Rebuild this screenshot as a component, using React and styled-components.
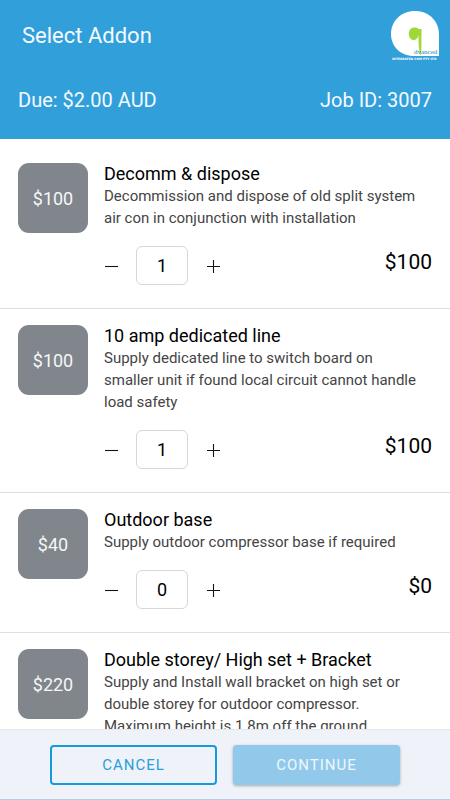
import React, { useState } from "react";
import styled, { createGlobalStyle } from "styled-components";

const GlobalStyle = createGlobalStyle`
  *, *::before, *::after { box-sizing: border-box; }
  body { margin: 0; background: #fff; color: #000; font-family: Roboto, "Liberation Sans", sans-serif; }
  button, input { font: inherit; color: inherit; }
`;

const Screen = styled.div`
  display: flex;
  flex-direction: column;
  height: 100vh;
`;

const Header = styled.header`
  flex: none;
  display: flex;
  flex-direction: column;
  background: #31a0da;
  color: #f4faff;
`;

const TitleBar = styled.div`
  display: flex;
  align-items: center;
  justify-content: space-between;
  height: 72px;
  padding: 0 10px 0 22px;
`;

const Title = styled.h1`
  margin: 0;
  font-size: 22px;
  line-height: 28px;
  font-weight: 400;
`;

const Logo = styled.svg`
  display: block;
  width: 50px;
  height: 50px;
`;

const Summary = styled.div`
  display: flex;
  justify-content: space-between;
  padding: 14px 18px 25px;
  font-size: 20px;
  line-height: 28px;
`;

const List = styled.ul`
  flex: 1;
  min-height: 0;
  overflow-y: auto;
  scrollbar-width: none;
  margin: 0;
  padding: 8px 0 0;
  list-style: none;
`;

const Item = styled.li`
  display: flex;
  gap: 16px;
  padding: 16px 18px 23px;
  border-bottom: 1px solid #dedfe1;
`;

const Badge = styled.div`
  flex: none;
  display: flex;
  align-items: center;
  justify-content: center;
  width: 70px;
  height: 70px;
  border-radius: 11px;
  background: #80868c;
  color: #f5f6f8;
  font-size: 18px;
`;

const Details = styled.div`
  flex: 1;
  min-width: 0;
`;

const Name = styled.h2`
  margin: 0;
  font-size: 18px;
  line-height: 22px;
  font-weight: 400;
`;

const Description = styled.p`
  margin: 0;
  padding-right: 8px;
  color: #444;
  font-size: 15px;
  line-height: 22px;
`;

const Controls = styled.div`
  display: flex;
  justify-content: space-between;
  margin-top: 17px;
`;

const Stepper = styled.div`
  display: flex;
  align-items: center;
  gap: 18px;
`;

const StepButton = styled.button`
  display: flex;
  padding: 0;
  border: 0;
  background: none;
  cursor: pointer;
`;

const Quantity = styled.input`
  width: 52px;
  height: 39px;
  padding: 0;
  border: 1px solid #d5d6df;
  border-radius: 6px;
  background: #fff;
  text-align: center;
  font-size: 18px;
`;

const Total = styled.output`
  font-size: 21px;
  line-height: 32px;
`;

const Footer = styled.footer`
  flex: none;
  display: grid;
  grid-template-columns: 1fr 1fr;
  gap: 16px;
  padding: 15px 50px 14px;
  border-top: 1px solid #e6e7ea;
  border-bottom: 1px solid #b4cde8;
  background: #eff2f8;
`;

const ActionButton = styled.button`
  height: 40px;
  padding: 0;
  border: ${(p) => (p.$filled ? "0" : "2px solid #159bd9")};
  border-radius: 4px;
  background: ${(p) => (p.$filled ? "#92c9ea" : "transparent")};
  color: ${(p) => (p.$filled ? "#eff7fd" : "#279fda")};
  box-shadow: ${(p) => (p.$filled ? "0 1px 3px rgba(0, 0, 0, 0.3)" : "none")};
  font-size: 15px;
  letter-spacing: 1px;
  cursor: pointer;
`;

const addons = [
  {
    name: "Decomm & dispose",
    description:
      "Decommission and dispose of old split system air con in conjunction with installation",
    price: 100,
    quantity: 1,
  },
  {
    name: "10 amp dedicated line",
    description:
      "Supply dedicated line to switch board on smaller unit if found local circuit cannot handle load safety",
    price: 100,
    quantity: 1,
  },
  {
    name: "Outdoor base",
    description: "Supply outdoor compressor base if required",
    price: 40,
    quantity: 0,
  },
  {
    name: "Double storey/ High set + Bracket",
    description:
      "Supply and Install wall bracket on high set or double storey for outdoor compressor. Maximum height is 1.8m off the ground",
    price: 220,
    quantity: 0,
  },
];

function StepIcon({ plus }) {
  return (
    <svg width="14" height="14" viewBox="0 0 14 14" aria-hidden="true">
      <path
        d={plus ? "M1 7.5H14M7.5 1V14" : "M1 7.5H14"}
        stroke="#151515"
        strokeWidth="1.1"
        fill="none"
      />
    </svg>
  );
}

function CompanyLogo() {
  return (
    <Logo viewBox="0 0 50 50" role="img" aria-label="Advanced">
      <path d="M25 0C39 0 49 10 49 24V45H24C10 45 1 35 1 23C1 10 11 0 25 0Z" fill="#fff" />
      <path
        d="M31.5 18H28.5C26.5 16 22 16 20 18.5C17.5 22 19 28 23 29C26 29.5 28 27 28.5 24C28.5 32 28.5 40 31 45C31.5 40 31.5 30 31.5 18Z"
        fill="#a1d839"
      />
      <text x="24" y="43" fontSize="7" fontFamily="Liberation Serif, serif" fill="#2089b8">
        dvanced
      </text>
      <text
        x="2"
        y="49"
        fontSize="3"
        fontWeight="700"
        fontFamily="DejaVu Sans, sans-serif"
        fill="#fff"
      >
        INTEGRATED COM PTY LTD
      </text>
    </Logo>
  );
}

function AddonItem({ addon }) {
  const [quantity, setQuantity] = useState(addon.quantity);
  const change = (value) => setQuantity(Math.max(0, Number(value) || 0));
  return (
    <Item>
      <Badge>${addon.price}</Badge>
      <Details>
        <Name>{addon.name}</Name>
        <Description>{addon.description}</Description>
        <Controls>
          <Stepper>
            <StepButton type="button" aria-label="Decrease" onClick={() => change(quantity - 1)}>
              <StepIcon />
            </StepButton>
            <Quantity
              aria-label={`Quantity of ${addon.name}`}
              inputMode="numeric"
              value={quantity}
              onChange={(e) => change(e.target.value)}
            />
            <StepButton type="button" aria-label="Increase" onClick={() => change(quantity + 1)}>
              <StepIcon plus />
            </StepButton>
          </Stepper>
          <Total>${addon.price * quantity}</Total>
        </Controls>
      </Details>
    </Item>
  );
}

export default function App() {
  return (
    <Screen>
      <GlobalStyle />
      <Header>
        <TitleBar>
          <Title>Select Addon</Title>
          <CompanyLogo />
        </TitleBar>
        <Summary>
          <span>Due: $2.00 AUD</span>
          <span>Job ID: 3007</span>
        </Summary>
      </Header>
      <List>
        {addons.map((addon) => (
          <AddonItem key={addon.name} addon={addon} />
        ))}
      </List>
      <Footer>
        <ActionButton type="button">CANCEL</ActionButton>
        <ActionButton type="button" $filled>
          CONTINUE
        </ActionButton>
      </Footer>
    </Screen>
  );
}
